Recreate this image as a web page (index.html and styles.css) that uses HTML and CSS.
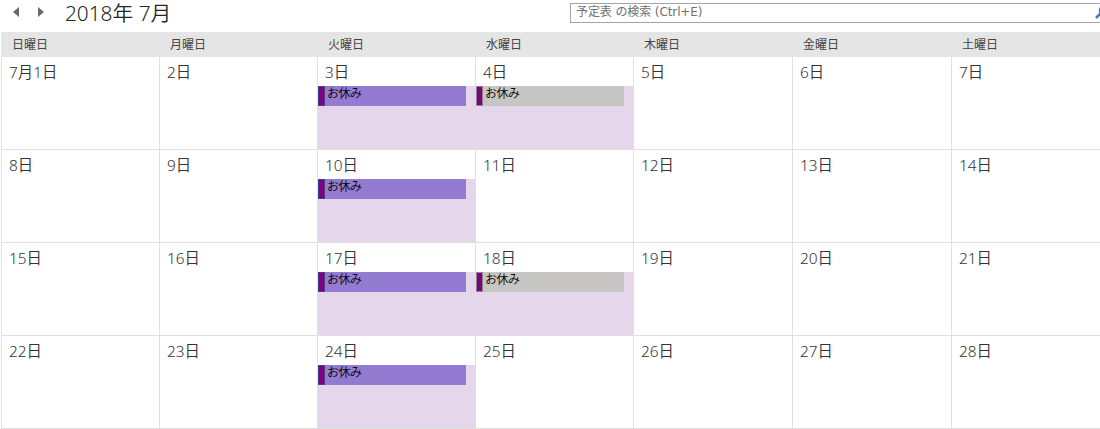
FILE: index.html
```html
<!DOCTYPE html>
<html lang="ja">
<head>
	<meta charset="UTF-8">
	<meta name="viewport" content="width=device-width, initial-scale=1.0">
	<title>予定表</title>
	<link rel="stylesheet" href="styles.css">
</head>
<body>
	<div class="toolbar">
		<div class="nav">
			<svg class="arrow" width="6" height="10" viewBox="0 0 6 10"><path d="M6 0 L0 5 L6 10 Z"/></svg>
			<svg class="arrow" width="6" height="10" viewBox="0 0 6 10"><path d="M0 0 L6 5 L0 10 Z"/></svg>
		</div>
		<h1 class="title">2018年 7月</h1>
		<div class="search">
			<span class="search-text">予定表 の検索 (Ctrl+E)</span>
			<svg class="search-icon" width="14" height="14" viewBox="0 0 14 14"><path d="M1 13 L5.5 8.5"/><circle cx="9" cy="5.5" r="4"/></svg>
		</div>
	</div>

	<div class="calendar">
		<div class="weekday">日曜日</div>
		<div class="weekday">月曜日</div>
		<div class="weekday">火曜日</div>
		<div class="weekday">水曜日</div>
		<div class="weekday">木曜日</div>
		<div class="weekday">金曜日</div>
		<div class="weekday">土曜日</div>

		<div class="day"><div class="date">7月1日</div></div>
		<div class="day"><div class="date">2日</div></div>
		<div class="day holiday"><div class="date">3日</div><div class="event">お休み</div></div>
		<div class="day holiday"><div class="date">4日</div><div class="event gray">お休み</div></div>
		<div class="day"><div class="date">5日</div></div>
		<div class="day"><div class="date">6日</div></div>
		<div class="day"><div class="date">7日</div></div>

		<div class="day"><div class="date">8日</div></div>
		<div class="day"><div class="date">9日</div></div>
		<div class="day holiday"><div class="date">10日</div><div class="event">お休み</div></div>
		<div class="day"><div class="date">11日</div></div>
		<div class="day"><div class="date">12日</div></div>
		<div class="day"><div class="date">13日</div></div>
		<div class="day"><div class="date">14日</div></div>

		<div class="day"><div class="date">15日</div></div>
		<div class="day"><div class="date">16日</div></div>
		<div class="day holiday"><div class="date">17日</div><div class="event">お休み</div></div>
		<div class="day holiday"><div class="date">18日</div><div class="event gray">お休み</div></div>
		<div class="day"><div class="date">19日</div></div>
		<div class="day"><div class="date">20日</div></div>
		<div class="day"><div class="date">21日</div></div>

		<div class="day"><div class="date">22日</div></div>
		<div class="day"><div class="date">23日</div></div>
		<div class="day holiday"><div class="date">24日</div><div class="event">お休み</div></div>
		<div class="day"><div class="date">25日</div></div>
		<div class="day"><div class="date">26日</div></div>
		<div class="day"><div class="date">27日</div></div>
		<div class="day"><div class="date">28日</div></div>
	</div>
</body>
</html>
```

FILE: styles.css
```css
*,
*::before {
	box-sizing: border-box;
}

body {
	margin: 0;
	background-color: #fff;
	color: #444;
	font-family: "Noto Sans", "Noto Sans CJK JP", sans-serif;
	overflow: hidden;
}

.toolbar {
	display: flex;
	align-items: flex-start;
	height: 32px;
}

.nav {
	display: flex;
	flex: none;
	gap: 19px;
	width: 65px;
	padding: 7px 0 0 13px;
}

.arrow {
	fill: #6a6a6a;
}

.title {
	flex: none;
	width: 505px;
	margin: 0;
	font-size: 20.8px;
	font-weight: 350;
	line-height: 26px;
	color: #262626;
}

/* runs past the right edge of the window */
.search {
	display: flex;
	flex: none;
	justify-content: space-between;
	width: 545px;
	height: 20px;
	margin-top: 3px;
	padding-left: 5px;
	border: 1px solid #a0a6b0;
	font-family: "DejaVu Sans", "Noto Sans CJK JP", sans-serif;
	font-size: 12px;
	line-height: 17px;
	color: #707070;
}

.search-text {
	letter-spacing: -0.1px;
}

.search-icon {
	flex: none;
	margin: 1px 5px 0 0;
	fill: none;
	stroke: #4a7ab5;
	stroke-width: 2.5;
}

.calendar {
	display: grid;
	grid-template-columns: 158px 158px 158px 158px 159px 159px 158px;
	grid-template-rows: 25px repeat(4, 93px);
	margin-left: 1px;
}

.weekday {
	padding-left: 11px;
	background-color: #e5e5e5;
	font-size: 12px;
	line-height: 25px;
}

.day {
	border-left: 1px solid #e0e0e0;
	border-bottom: 1px solid #e0e0e0;
}

.date {
	height: 29px;
	padding-left: 7px;
	background-color: #fff;
	font-size: 15.4px;
	font-weight: 350;
	line-height: 31px;
	color: #333;
}

.holiday {
	background-color: #e5d6ec;
}

.event {
	display: flex;
	width: 148px;
	height: 20px;
	background-color: #937bd1;
	font-size: 12px;
	font-weight: 350;
	line-height: 16px;
	letter-spacing: -0.5px;
	color: #000;
}

/* category bar on the left edge */
.event::before {
	content: "";
	width: 7px;
	height: 20px;
	margin-right: 2px;
	border: 1px solid #483d8b;
	background-color: #800080;
}

.event.gray {
	background-color: #c8c6c4;
}

.event.gray::before {
	border-color: #8a8886;
}
```
